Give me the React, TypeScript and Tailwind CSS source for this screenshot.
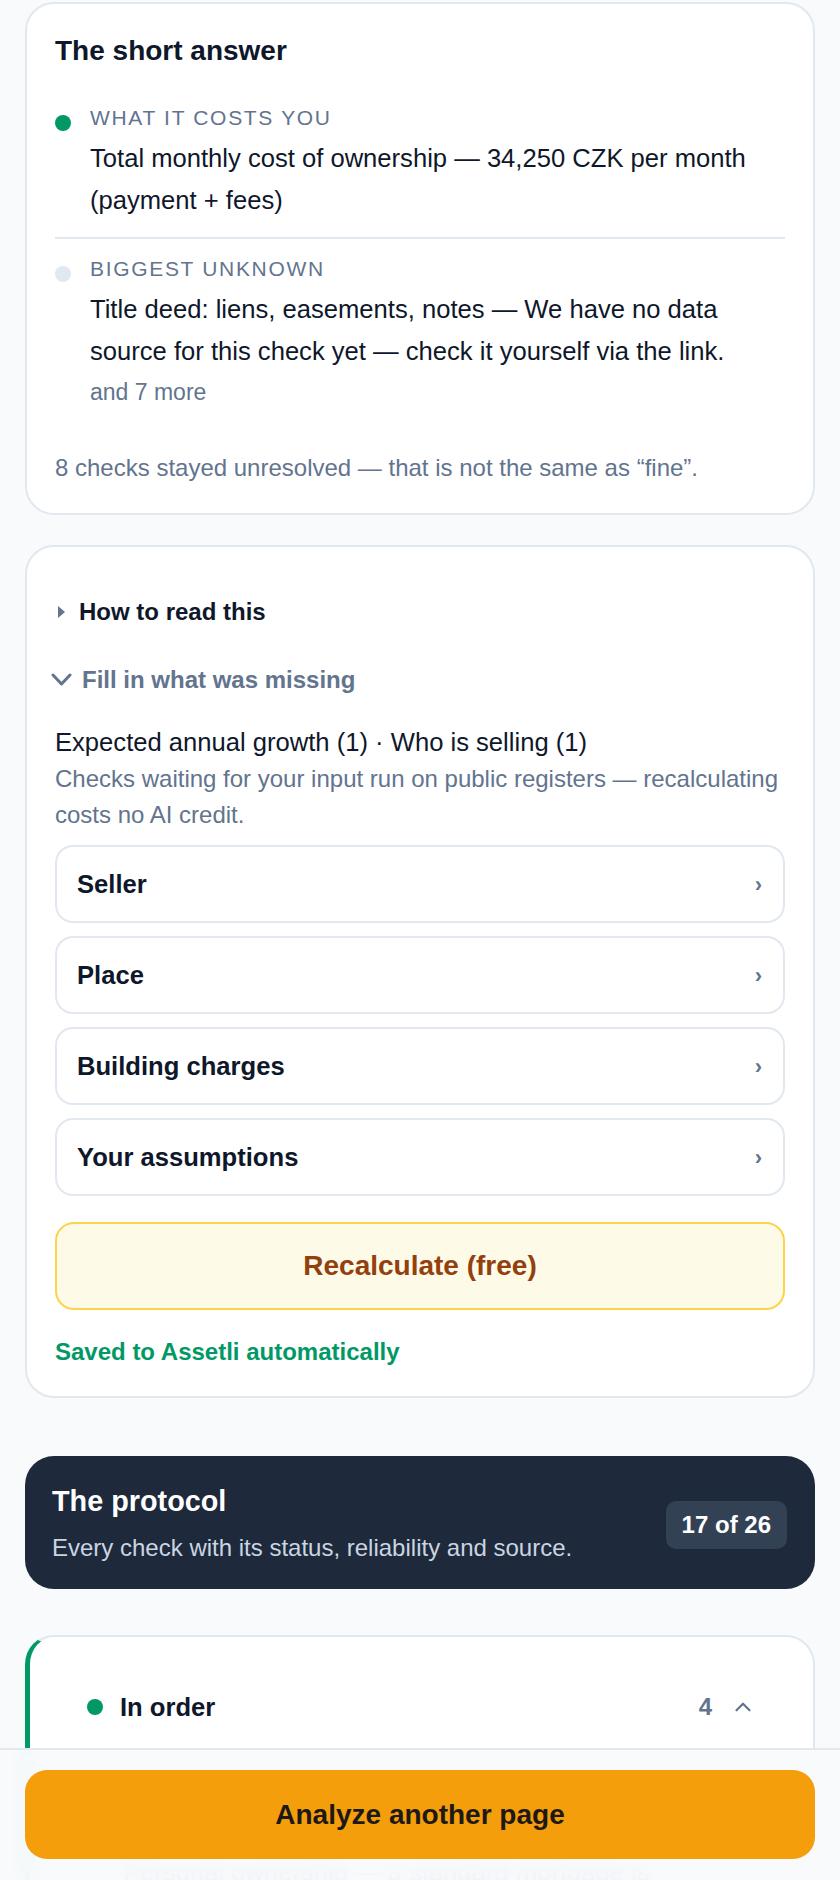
import { ChevronUp } from 'lucide-react'

const shortAnswer = [
  {
    label: 'What it costs you',
    text: 'Total monthly cost of ownership — 34,250 CZK per month (payment + fees)',
    dot: 'bg-emerald-600',
  },
  {
    label: 'Biggest unknown',
    text: 'Title deed: liens, easements, notes — We have no data source for this check yet — check it yourself via the link.',
    dot: 'bg-slate-200',
    more: 'and 7 more',
  },
]

const groups = ['Seller', 'Place', 'Building charges', 'Your assumptions']

function Triangle() {
  return (
    <svg width="7" height="12" viewBox="0 0 7 12" className="flex-shrink-0 text-slate-500">
      <path d="M0 0 L7 6 L0 12 Z" fill="currentColor" />
    </svg>
  )
}

function ChevronDownThick() {
  return (
    <svg width="21" height="14" viewBox="0 0 21 14" fill="none" className="flex-shrink-0 text-slate-500">
      <polyline points="2,2 10.5,11 19,2" stroke="currentColor" strokeWidth="3" strokeLinecap="round" strokeLinejoin="round" />
    </svg>
  )
}

export default function App() {
  return (
    <div
      className="min-h-screen bg-[#f8fafc] text-slate-900 pb-[200px]"
      style={{ fontFamily: '"Liberation Sans", Arial, sans-serif' }}
    >
      <div className="px-[25px] pt-[2px]">
        {/* Short answer */}
        <section className="rounded-[29px] border-2 border-slate-200 bg-white px-[28px] pt-[28px] pb-[27px]">
          <h2 className="text-[28px] leading-[38px] font-bold text-slate-900">The short answer</h2>
          <div className="mt-[33px]">
            {shortAnswer.map((item, i) => (
              <div
                key={item.label}
                className={`flex gap-[19px] ${i === 0 ? 'pb-4' : 'border-t-2 border-slate-200 pt-[15px]'}`}
              >
                <span className={`mt-[12px] h-4 w-4 flex-shrink-0 rounded-full ${item.dot}`} />
                <div className="min-w-0">
                  <div className="text-[21px] leading-[30px] tracking-[0.08em] uppercase text-slate-500">
                    {item.label}
                  </div>
                  <p className="mt-1 text-[25.6px] leading-[42px] text-slate-900">{item.text}</p>
                  {item.more && (
                    <div className="mt-[3px] text-[23px] leading-[34px] text-slate-500">{item.more}</div>
                  )}
                </div>
              </div>
            ))}
          </div>
          <p className="mt-[41px] text-[24px] leading-[36px] text-slate-500">
            8 checks stayed unresolved — that is not the same as “fine”.
          </p>
        </section>

        {/* Inputs */}
        <section className="mt-[30px] rounded-[29px] border-2 border-slate-200 bg-white px-[28px] pt-[46px] pb-[26px]">
          <div className="flex h-[38px] items-center gap-[14px] pl-[3px]">
            <Triangle />
            <span className="text-[24px] font-bold text-slate-900">How to read this</span>
          </div>
          <div className="mt-[30px] flex h-[38px] items-center gap-[10px] -ml-[4px]">
            <ChevronDownThick />
            <span className="text-[24px] font-bold text-slate-500">Fill in what was missing</span>
          </div>
          <p className="mt-[24px] text-[25.6px] leading-[38px] text-slate-900">
            Expected annual growth (1) · Who is selling (1)
          </p>
          <p className="text-[24px] leading-[36px] text-slate-500">
            Checks waiting for your input run on public registers — recalculating costs no AI credit.
          </p>
          <div className="mt-[12px] flex flex-col gap-[13px]">
            {groups.map((g) => (
              <button
                key={g}
                className="flex h-[78px] items-center justify-between rounded-[18px] border-2 border-slate-200 bg-white pl-[20px] pr-[21px] text-left"
              >
                <span className="text-[25.6px] font-bold text-slate-900">{g}</span>
                <span className="text-[22px] font-semibold text-slate-500">›</span>
              </button>
            ))}
          </div>
          <button className="mt-[26px] flex h-[88px] w-full items-center justify-center rounded-[19px] border-2 border-[#fcd34d] bg-[#fefae8] text-[28px] font-bold text-[#92400e]">
            Recalculate (free)
          </button>
          <p className="mt-[24px] text-[24px] leading-[36px] font-bold text-emerald-600">
            Saved to Assetli automatically
          </p>
        </section>

        {/* Protocol header */}
        <section className="mt-[58px] flex items-center justify-between rounded-[29px] bg-[#1e293b] pl-[27px] pr-[28px] pt-[27px] pb-[23px]">
          <div>
            <h2 className="text-[28.8px] leading-[36px] font-bold text-white">The protocol</h2>
            <p className="mt-[11px] text-[24px] leading-[36px] text-slate-300">
              Every check with its status, reliability and source.
            </p>
          </div>
          <span className="flex h-[48px] items-center rounded-[10px] bg-[#334155] px-[16px] text-[24px] font-bold text-white">
            17 of 26
          </span>
        </section>

        {/* In order group */}
        <section className="mt-[46px] rounded-[29px] border-2 border-l-[5px] border-slate-200 border-l-emerald-600 bg-white pb-[40px]">
          <div className="flex h-[38px] items-center justify-between pl-[57px] pr-[57px] mt-[51px]">
            <div className="flex items-center gap-[17px]">
              <span className="h-4 w-4 rounded-full bg-emerald-600" />
              <span className="text-[25.6px] font-bold text-slate-900">In order</span>
            </div>
            <div className="flex items-center gap-[18px] text-slate-500">
              <span className="text-[24px] font-bold">4</span>
              <ChevronUp size={26} strokeWidth={2} />
            </div>
          </div>
          <div className="mt-[125px] pl-[93px] pr-[57px]">
            <p className="text-[25.6px] leading-[42px] text-slate-700">
              Personal ownership — a standard mortgage is available for this type of flat.
            </p>
          </div>
        </section>
      </div>

      {/* Sticky action bar */}
      <div className="fixed inset-x-0 bottom-0 border-t-2 border-slate-200 bg-[#f8fafc]/95 backdrop-blur-sm px-[25px] pt-[20px] pb-[21px]">
        <button className="flex h-[89px] w-full items-center justify-center rounded-[22px] bg-[#f59e0b] text-[28px] font-bold text-[#1c1917]">
          Analyze another page
        </button>
      </div>
    </div>
  )
}
